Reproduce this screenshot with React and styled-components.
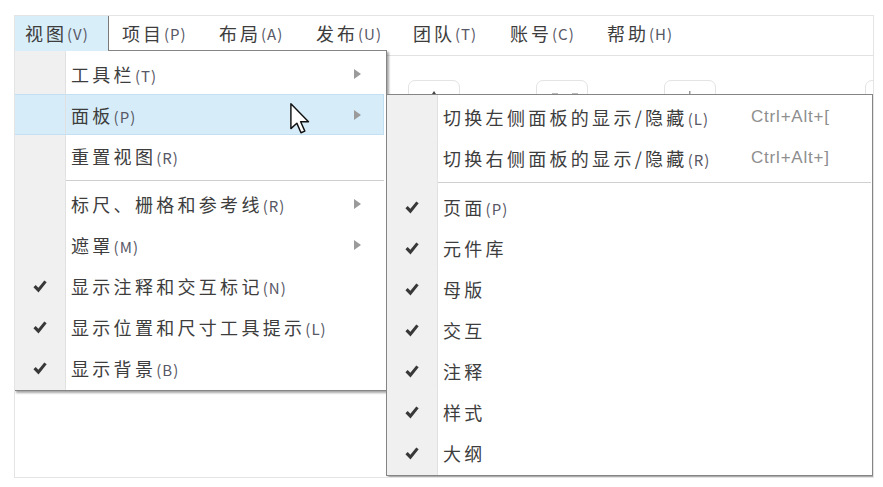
import React from 'react';
import styled, {createGlobalStyle} from "styled-components";

const GlobalStyle = createGlobalStyle`
  html, body {
    margin: 0;
    padding: 0;
    background: #fff;
  }
  body {
    font-family: "Noto Sans CJK SC", "Noto Sans", sans-serif;
    color: #3d3d3d;
  }
`;

const topMenus = [
    {label: "视图", key: "V", open: true},
    {label: "项目", key: "P"},
    {label: "布局", key: "A"},
    {label: "发布", key: "U"},
    {label: "团队", key: "T"},
    {label: "账号", key: "C"},
    {label: "帮助", key: "H"},
];

const viewMenu = [
    {label: "工具栏", key: "T", arrow: true},
    {label: "面板", key: "P", arrow: true, active: true},
    {label: "重置视图", key: "R"},
    {sep: true},
    {label: "标尺、栅格和参考线", key: "R", arrow: true},
    {label: "遮罩", key: "M", arrow: true},
    {label: "显示注释和交互标记", key: "N", checked: true},
    {label: "显示位置和尺寸工具提示", key: "L", checked: true},
    {label: "显示背景", key: "B", checked: true},
];

const panelMenu = [
    {label: "切换左侧面板的显示/隐藏", key: "L", shortcut: "Ctrl+Alt+["},
    {label: "切换右侧面板的显示/隐藏", key: "R", shortcut: "Ctrl+Alt+]"},
    {sep: true},
    {label: "页面", key: "P", checked: true},
    {label: "元件库", checked: true},
    {label: "母版", checked: true},
    {label: "交互", checked: true},
    {label: "注释", checked: true},
    {label: "样式", checked: true},
    {label: "大纲", checked: true},
];

function Check() {
    return (
        <svg width="14" height="13" viewBox="0 0 13 12">
            <path d="M0.4 6.6 L2.5 4.5 L5 7.1 L10.5 0.4 L12.7 2.1 L5.1 11.6 Z" fill="#383838"/>
        </svg>
    );
}

function Arrow() {
    return (
        <svg width="7" height="10" viewBox="0 0 7 10">
            <polygon points="0,0 7,5 0,10" fill="#9b9b9b"/>
        </svg>
    );
}

function Pointer() {
    return (
        <svg width="21" height="32" viewBox="0 0 13 20">
            <path d="M0.5 0.5 L0.5 16 L4.2 12.6 L6.8 18.6 L9.2 17.6 L6.6 11.7 L11.5 11.7 Z"
                  fill="#fff" stroke="#111" strokeWidth="0.9" strokeLinejoin="round"/>
        </svg>
    );
}

function Label({text, mnemonic}) {
    return (
        <>
            {text}
            {mnemonic && <Key>({mnemonic})</Key>}
        </>
    );
}

function MenuList({items, sepHeight, withShortcut}) {
    return items.map((item, i) => {
        if (item.sep) return <Separator key={i} $h={sepHeight}/>;
        return (
            <Row key={i} $active={item.active}>
                <Gutter>{item.checked && <Check/>}</Gutter>
                <Text><Label text={item.label} mnemonic={item.key}/></Text>
                {withShortcut
                    ? <Shortcut>{item.shortcut}</Shortcut>
                    : <Side>{item.arrow && <Arrow/>}</Side>}
            </Row>
        );
    });
}

function App() {
    return (
        <>
            <GlobalStyle/>
            <Frame>
                <MenuBar>
                    {topMenus.map(m => (
                        <TopItem key={m.label} $open={m.open}>
                            <Label text={m.label} mnemonic={m.key}/>
                        </TopItem>
                    ))}
                </MenuBar>
                <Toolbar>
                    <ToolButton>
                        <svg width="8" height="6" viewBox="0 0 8 6"><polygon points="4,0 8,6 0,6" fill="#444"/></svg>
                    </ToolButton>
                    <ToolButton>
                        <svg width="40" height="6" viewBox="0 0 40 6">
                            <rect x="10" y="2" width="6" height="2" fill="#bbb"/>
                            <rect x="30" y="2" width="6" height="2" fill="#bbb"/>
                        </svg>
                    </ToolButton>
                    <ToolButton>
                        <svg width="2" height="6" viewBox="0 0 2 6"><rect width="1.5" height="6" fill="#999"/></svg>
                    </ToolButton>
                    <ToolButton $last/>
                </Toolbar>

                <ViewMenu>
                    <MenuList items={viewMenu} sepHeight={7}/>
                </ViewMenu>
                <PanelMenu>
                    <MenuList items={panelMenu} sepHeight={8} withShortcut/>
                </PanelMenu>
                <CursorWrap><Pointer/></CursorWrap>
            </Frame>
        </>
    );
}

export default App;

const Frame = styled.div`
  position: relative;
  box-sizing: border-box;
  margin: 15px 0 0 14px;
  width: 860px;
  height: 463px;
  border: 1px solid #e4e4e4;
  overflow: hidden;
  background: #fff;
`;

const MenuBar = styled.div`
  display: flex;
  align-items: flex-start;
  gap: 3px;
  height: 39px;
  border-bottom: 1px solid #e2e2e2;
`;

const TopItem = styled.div`
  box-sizing: border-box;
  width: 94px;
  height: 34px;
  padding-left: 10px;
  display: flex;
  align-items: center;
  font-size: 18px;
  letter-spacing: 3px;
  white-space: nowrap;
  color: #3d3d3d;
  background: ${p => p.$open ? "#d8eef9" : "transparent"};
  border-right: 1px solid ${p => p.$open ? "#7a7a7a" : "transparent"};
`;

const Key = styled.span`
  font-size: 15px;
  letter-spacing: 1px;
  color: #585866;
`;

const Toolbar = styled.div`
  display: flex;
  gap: 76px;
  padding: 24px 0 0 393px;
`;

const ToolButton = styled.div`
  flex-shrink: 0;
  box-sizing: border-box;
  width: 52px;
  height: 44px;
  padding-top: 10px;
  display: flex;
  justify-content: center;
  align-items: flex-start;
  border: 1px solid #e3e3e3;
  border-radius: 7px;
  margin-left: ${p => p.$last ? "73px" : "0"};
`;

const Menu = styled.div`
  position: absolute;
  box-sizing: border-box;
  display: flex;
  flex-direction: column;
  border: 1px solid #858585;
  box-shadow: 2px 2px 2px rgba(0, 0, 0, 0.35);
  background: linear-gradient(to right, #f0f0f0 0 50px, #e3e3e3 50px 51px, #fff 51px);
  z-index: 2;
`;

const ViewMenu = styled(Menu)`
  left: -1px;
  top: 34px;
  width: 373px;
  height: 341px;
  padding: 2px 2px 2px 0;

  &::before {
    content: "";
    position: absolute;
    left: 0;
    top: -1px;
    width: 93px;
    height: 1px;
    background: #d8eef9;
  }
`;

const PanelMenu = styled(Menu)`
  left: 371px;
  top: 78px;
  width: 487px;
  height: 382px;
  padding: 1px 1px 2px 0;
  z-index: 3;
`;

const Row = styled.div`
  box-sizing: border-box;
  display: flex;
  align-items: center;
  height: 41px;
  flex-shrink: 0;
  background: ${p => p.$active ? "#d6edf9" : "transparent"};
  border: 1px solid ${p => p.$active ? "#c2e0f2" : "transparent"};
  border-left: none;
`;

const Gutter = styled.div`
  width: 50px;
  align-self: stretch;
  display: flex;
  align-items: center;
  justify-content: center;
  flex-shrink: 0;
  border-right: 1px solid #e0e0e0;
  padding-top: 1px;
`;

const Text = styled.div`
  flex: 1;
  padding-left: 5px;
  font-size: 18px;
  letter-spacing: 3.3px;
  white-space: nowrap;
  color: #3d3d3d;
`;

const Side = styled.div`
  width: 29px;
  display: flex;
  align-items: center;
  padding-top: 1px;
`;

const Shortcut = styled.div`
  width: 119px;
  font-family: "Liberation Sans", "Noto Sans", sans-serif;
  font-size: 17px;
  letter-spacing: 0.8px;
  color: #8e8e8e;
  white-space: nowrap;
`;

const Separator = styled.div`
  position: relative;
  flex-shrink: 0;
  height: ${p => p.$h}px;

  &::after {
    content: "";
    position: absolute;
    left: 51px;
    right: 0;
    top: 4px;
    height: 1px;
    background: #cfcfcf;
  }
`;

const CursorWrap = styled.div`
  position: absolute;
  left: 275px;
  top: 87px;
  z-index: 5;
  line-height: 0;
`;
